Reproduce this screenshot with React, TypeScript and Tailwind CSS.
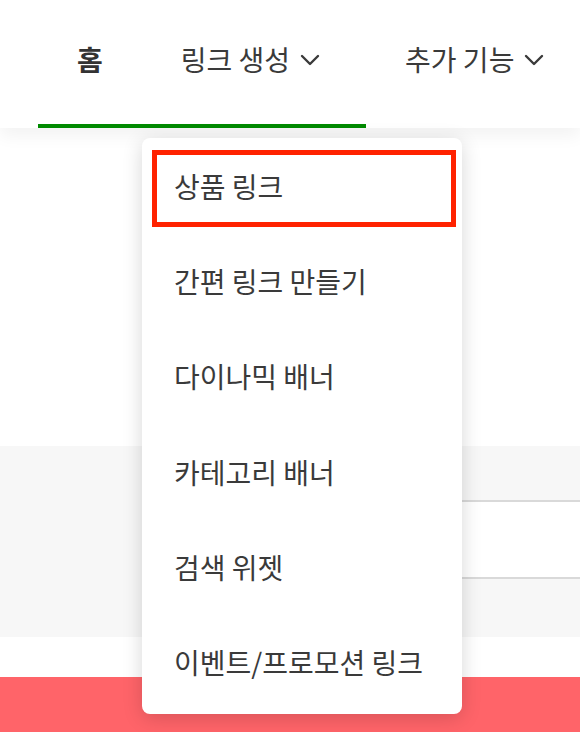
import React from "react";

const font = { fontFamily: '"Noto Sans CJK KR", "Noto Sans", sans-serif' };

function Chevron() {
  return (
    <svg width="20" height="12" viewBox="0 0 20 12" fill="none" className="ml-[10px] mt-[2px]">
      <path d="M2 2 L10 10 L18 2" stroke="#3a3a3a" strokeWidth="2.4" strokeLinecap="round" strokeLinejoin="round" />
    </svg>
  );
}

const items = ["상품 링크", "간편 링크 만들기", "다이나믹 배너", "카테고리 배너", "검색 위젯", "이벤트/프로모션 링크"];

export default function App() {
  return (
    <div className="relative w-[580px] h-[732px] overflow-hidden bg-white text-[#333]" style={font}>
      <header className="relative z-10 bg-white h-[128px] flex flex-col shadow-[0_8px_16px_rgba(0,0,0,0.05)]">
        <nav className="h-[118px] flex items-center pl-[77px] text-[28px] leading-none">
          <span className="font-bold text-[#333]">홈</span>
          <span className="ml-[78px] flex items-center text-[#3a3a3a]">
            링크 생성
            <Chevron />
          </span>
          <span className="ml-[85px] flex items-center text-[#3a3a3a]">
            추가 기능
            <Chevron />
          </span>
        </nav>
        <div className="h-[6px]" />
        <div className="ml-[38px] w-[328px] h-[4px] bg-[#008a00]" />
      </header>
      <main className="flex flex-col">
        <div className="h-[318px] bg-white" />
        <section className="h-[191px] bg-[#f7f7f7] flex flex-col">
          <div className="h-[54px]" />
          <div className="ml-[320px] h-[79px] bg-white border-y-2 border-[#d9d9d9]" />
        </section>
        <div className="h-[40px] bg-white" />
        <div className="h-[55px] bg-[#ff6469]" />
      </main>

      <div className="absolute left-[142px] top-[138px] z-20 w-[320px] h-[576px] bg-white rounded-[8px] shadow-[0_4px_20px_rgba(0,0,0,0.16)] py-[2px] flex flex-col">
        {items.map((t, i) => (
          <div key={t} className="relative h-[95.5px] flex items-center pl-[32px] text-[28px] text-[#3a3a3a]">
            {i === 0 && (
              <span className="absolute left-[10px] right-[6px] top-[10px] h-[77px] border-[5px] border-[#ff2200]" />
            )}
            <span className="relative -mt-[4px]">{t}</span>
          </div>
        ))}
      </div>
    </div>
  );
}
